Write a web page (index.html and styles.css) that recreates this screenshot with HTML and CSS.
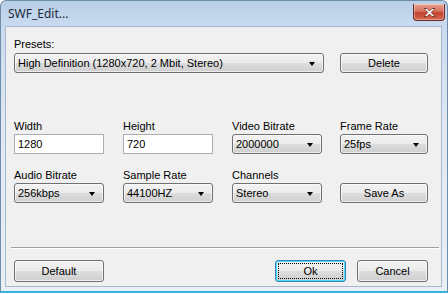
FILE: index.html
```html
<!DOCTYPE html>
<html>
<head>
<meta charset="utf-8">
<link rel="stylesheet" href="styles.css">
</head>
<body>
<div class="window">
  <div class="titlebar">
    <span class="title">SWF_Edit...</span>
    <div class="close">
      <svg width="15" height="11" viewBox="0 0 15 11"><path d="M2 1.5 L5 1.5 L7.5 4 L10 1.5 L13 1.5 L9.2 5.5 L13 9.5 L10 9.5 L7.5 7 L5 9.5 L2 9.5 L5.8 5.5 Z" fill="#fff" stroke="#6b2a1f" stroke-width="0.8"/></svg>
    </div>
  </div>
  <div class="client">
    <div class="label presets-label">Presets:</div>
    <div class="preset-row">
      <div class="combo wide"><span>High Definition (1280x720, 2 Mbit, Stereo)</span><i class="arrow"></i></div>
      <div class="btn">Delete</div>
    </div>
    <div class="grid">
      <div class="field"><div class="label">Width</div><div class="input">1280</div></div>
      <div class="field"><div class="label">Height</div><div class="input">720</div></div>
      <div class="field"><div class="label">Video Bitrate</div><div class="combo"><span>2000000</span><i class="arrow"></i></div></div>
      <div class="field last"><div class="label">Frame Rate</div><div class="combo"><span>25fps</span><i class="arrow"></i></div></div>
      <div class="field"><div class="label">Audio Bitrate</div><div class="combo"><span>256kbps</span><i class="arrow"></i></div></div>
      <div class="field"><div class="label">Sample Rate</div><div class="combo"><span>44100HZ</span><i class="arrow"></i></div></div>
      <div class="field"><div class="label">Channels</div><div class="combo"><span>Stereo</span><i class="arrow"></i></div></div>
      <div class="field last"><div class="label">&nbsp;</div><div class="btn">Save As</div></div>
    </div>
    <div class="separator"></div>
    <div class="footer">
      <div class="btn footbtn">Default</div>
      <div class="spacer"></div>
      <div class="btn okbtn focused"><span class="focus">Ok</span></div>
      <div class="btn okbtn">Cancel</div>
    </div>
  </div>
</div>
</body>
</html>
```
FILE: styles.css
```css
* { box-sizing: border-box; }
html, body { margin: 0; padding: 0; }
body {
  width: 448px;
  height: 294px;
  overflow: hidden;
  background: #ffffff;
  font-family: "Liberation Sans", Arial, sans-serif;
  font-size: 11px;
  color: #000;
}
.window {
  width: 448px;
  height: 293px;
  border: 1px solid #6f8cab;
  border-bottom: 2px solid #35b6dd;
  border-radius: 6px 6px 0 0;
  background: linear-gradient(to bottom, #b9cfe8 0px, #c9dbef 26px, #dfe8f3 120px, #eaeff5 294px);
  display: flex;
  flex-direction: column;
  padding: 0 5px 4px 4px;
}
.titlebar {
  height: 25px;
  display: flex;
  align-items: flex-start;
  justify-content: space-between;
  flex: none;
}
.title {
  font-family: "Noto Sans", sans-serif;
  font-size: 12px;
  color: #1e2a3a;
  padding: 5px 0 0 3px;
  line-height: 15px;
}
.close {
  width: 32px;
  height: 17px;
  margin: 3px -3px 0 0;
  border: 1px solid #6e2a22;
  border-top: none;
  border-radius: 0 0 4px 4px;
  background: linear-gradient(to bottom, #e8a293 0%, #d7735f 45%, #c2412b 55%, #d46a52 100%);
  display: flex;
  align-items: center;
  justify-content: center;
  box-shadow: inset 0 0 0 1px rgba(255,255,255,0.35);
}
.close svg { display: block; }
.client {
  flex: 1;
  background: #f0f0f0;
  border: 1px solid #a6b8cc;
  padding: 0 0 0 8px;
  display: flex;
  flex-direction: column;
}
.label {
  line-height: 15px;
  height: 15px;
  white-space: nowrap;
}
.presets-label { margin-top: 10px; }
.preset-row {
  display: flex;
  margin-top: 1px;
}
.combo {
  height: 20px;
  width: 90px;
  border: 1px solid #707070;
  border-radius: 3px;
  background: linear-gradient(to bottom, #f2f2f2 0%, #ebebeb 50%, #dddddd 50%, #cfcfcf 100%);
  box-shadow: inset 0 0 0 1px rgba(255,255,255,0.6);
  display: flex;
  align-items: center;
  padding: 0 0 0 3px;
  line-height: 16px;
  white-space: nowrap;
}
.combo span { flex: 1; overflow: hidden; }
.combo.wide { width: 310px; }
.arrow {
  display: block;
  width: 0;
  height: 0;
  border-left: 3.5px solid transparent;
  border-right: 3.5px solid transparent;
  border-top: 4px solid #000;
  margin: 1px 8px 0 4px;
  flex: none;
}
.btn {
  height: 20px;
  width: 88px;
  border: 1px solid #707070;
  border-radius: 3px;
  background: linear-gradient(to bottom, #f2f2f2 0%, #ebebeb 50%, #dddddd 50%, #cfcfcf 100%);
  box-shadow: inset 0 0 0 1px rgba(255,255,255,0.7);
  display: flex;
  align-items: center;
  justify-content: center;
  line-height: 16px;
  white-space: nowrap;
}
.preset-row .btn { margin-left: 16px; }
.grid {
  display: grid;
  grid-template-columns: 109px 109px 108px 88px;
  row-gap: 14px;
  margin-top: 46px;
}
.field .combo, .field .input { width: 90px; }
.field.last .combo, .field.last .btn { width: 88px; }
.input {
  height: 20px;
  border: 1px solid #abadb3;
  background: #fff;
  padding: 0 0 0 3px;
  line-height: 18px;
  display: flex;
  align-items: center;
}
.separator {
  margin: 44px 2px 0 -3px;
  height: 2px;
  border-top: 1px solid #a0a0a0;
  border-bottom: 1px solid #ffffff;
}
.footer {
  display: flex;
  margin-top: 11px;
  padding-right: 13px;
}
.footbtn { width: 90px; height: 22px; }
.spacer { flex: 1; }
.okbtn { width: 71px; height: 22px; margin-left: 11px; }
.focused {
  border-color: #3c7fb1;
  box-shadow: inset 0 0 0 1px #48dffc;
  padding: 2px;
}
.focus {
  flex: 1;
  align-self: stretch;
  border: 1px dotted #000;
  display: flex;
  align-items: center;
  justify-content: center;
}
```
